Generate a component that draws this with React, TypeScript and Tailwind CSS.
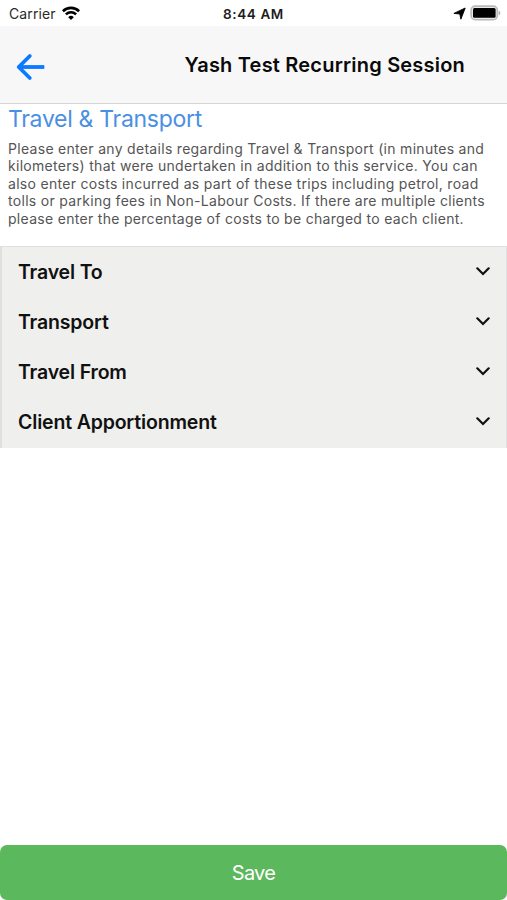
import { useState } from "react";

const sections = ["Travel To", "Transport", "Travel From", "Client Apportionment"];

function StatusBar() {
  return (
    <div className="grid h-[26px] shrink-0 grid-cols-3 items-center bg-white text-black">
      <div className="flex items-center gap-[6px] pl-[9px]">
        <span className="pt-[2px] text-[14px] leading-[24px] tracking-[0.1px] text-[#2a2a2a]">Carrier</span>
        <svg width="18" height="14" viewBox="0 0 18 14" fill="none" stroke="#000" strokeWidth="2.6">
          <path d="M0.9 5.2a11.6 11.6 0 0 1 16.2 0" />
          <path d="M3.9 8.4a7.3 7.3 0 0 1 10.2 0" />
          <path d="M9 14 6.2 11.2a4 4 0 0 1 5.6 0Z" fill="#000" stroke="none" />
        </svg>
      </div>
      <span className="pt-[2px] text-center text-[13.5px] leading-[24px] font-semibold tracking-[0.6px] text-[#1c1c1c]">
        8:44 AM
      </span>
      <div className="flex items-center justify-end gap-[4px] pr-[6px]">
        <svg width="13" height="13" viewBox="0 0 13 13">
          <path d="M12.2 1 7.9 12.2 6.8 7 0.9 6.4Z" fill="#000" stroke="#000" strokeWidth="0.9" strokeLinejoin="round" />
        </svg>
        <svg width="31" height="16" viewBox="0 0 31 16">
          <rect x="1.1" y="1.1" width="26.2" height="13.6" rx="4" fill="#e9e9e9" stroke="#b9b9b9" strokeWidth="1.6" />
          <rect x="3" y="3" width="22.6" height="9.8" rx="1.5" fill="#000" />
          <path d="M28.6 5.4c2.4 0.8 2.4 4.2 0 5Z" fill="#b5b5b5" />
        </svg>
      </div>
    </div>
  );
}

function Header() {
  return (
    <header className="flex h-[78px] shrink-0 items-center justify-between border-b border-[#d6d6d6] bg-[#f7f7f7] pr-[42px] pl-[16px]">
      <button aria-label="Back" className="pt-[4px]">
        <svg width="29" height="28" viewBox="0 0 29 28" fill="none" stroke="#0a7aff" strokeWidth="3.8" strokeLinecap="round" strokeLinejoin="round">
          <path d="M13.8 3 2.7 14l11.1 11" />
          <path d="M4 14h24.3" strokeLinecap="butt" />
        </svg>
      </button>
      <h1 className="text-[20px] leading-[24px] font-semibold tracking-[0.2px] whitespace-nowrap text-[#0a0a0a]">
        Yash Test Recurring Session
      </h1>
    </header>
  );
}

export default function App() {
  const [open, setOpen] = useState<string | null>(null);

  return (
    <div className="flex h-[900px] w-[507px] flex-col overflow-hidden bg-white font-['Inter',sans-serif]">
      <StatusBar />
      <Header />

      <main className="flex-1">
        <h2 className="pl-[8px] text-[23px] leading-[30px] tracking-[-0.3px] text-[#4a90e2]">
          Travel &amp; Transport
        </h2>
        <p className="pt-[5.5px] pl-[8px] text-[14px] leading-[17.5px] tracking-[0.3px] whitespace-nowrap text-[#555]">
          Please enter any details regarding Travel &amp; Transport (in minutes and
          <br />
          kilometers) that were undertaken in addition to this service. You can
          <br />
          also enter costs incurred as part of these trips including petrol, road
          <br />
          tolls or parking fees in Non-Labour Costs. If there are multiple clients
          <br />
          please enter the percentage of costs to be charged to each client.
        </p>

        <div className="mt-[18.5px] h-[202px] border-x border-t border-l-2 border-[#e0e0e0] bg-[#efefed]">
          {sections.map((name) => (
            <button
              key={name}
              onClick={() => setOpen(open === name ? null : name)}
              className="flex h-[50px] w-full items-center justify-between pr-[16px] pl-[16px]"
            >
              <span className="text-[19.5px] leading-[24px] font-semibold tracking-[-0.17px] text-[#111]">{name}</span>
              <svg width="14" height="9" viewBox="0 0 14 9" fill="none" stroke="#111" strokeWidth="2.2" strokeLinecap="round">
                <path d="M1.3 1.3 7 7l5.7-5.7" />
              </svg>
            </button>
          ))}
        </div>
      </main>

      <button className="h-[55px] w-full shrink-0 rounded-[7px] bg-[#5cb85c] text-[20px] tracking-[-0.7px] text-white">
        Save
      </button>
    </div>
  );
}
